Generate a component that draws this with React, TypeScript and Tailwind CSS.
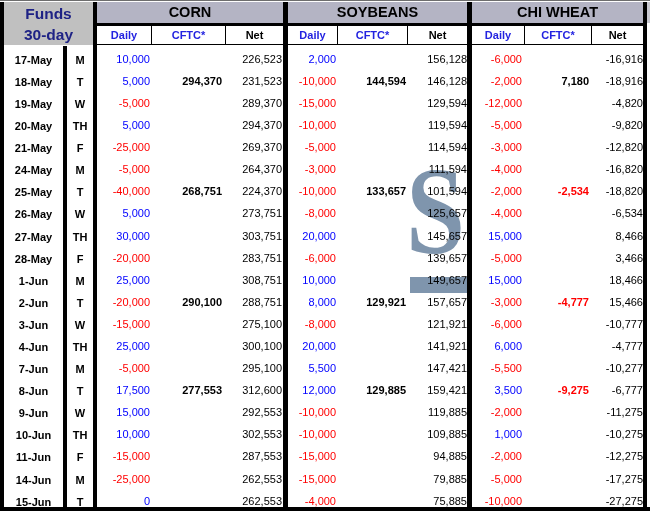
import React from 'react'

type Trio = [string, string, string]
type Row = { date: string; day: string; corn: Trio; soy: Trio; wheat: Trio }

const rows: Row[] = [
  { date: '17-May', day: 'M', corn: ['10,000', '', '226,523'], soy: ['2,000', '', '156,128'], wheat: ['-6,000', '', '-16,916'] },
  { date: '18-May', day: 'T', corn: ['5,000', '294,370', '231,523'], soy: ['-10,000', '144,594', '146,128'], wheat: ['-2,000', '7,180', '-18,916'] },
  { date: '19-May', day: 'W', corn: ['-5,000', '', '289,370'], soy: ['-15,000', '', '129,594'], wheat: ['-12,000', '', '-4,820'] },
  { date: '20-May', day: 'TH', corn: ['5,000', '', '294,370'], soy: ['-10,000', '', '119,594'], wheat: ['-5,000', '', '-9,820'] },
  { date: '21-May', day: 'F', corn: ['-25,000', '', '269,370'], soy: ['-5,000', '', '114,594'], wheat: ['-3,000', '', '-12,820'] },
  { date: '24-May', day: 'M', corn: ['-5,000', '', '264,370'], soy: ['-3,000', '', '111,594'], wheat: ['-4,000', '', '-16,820'] },
  { date: '25-May', day: 'T', corn: ['-40,000', '268,751', '224,370'], soy: ['-10,000', '133,657', '101,594'], wheat: ['-2,000', '-2,534', '-18,820'] },
  { date: '26-May', day: 'W', corn: ['5,000', '', '273,751'], soy: ['-8,000', '', '125,657'], wheat: ['-4,000', '', '-6,534'] },
  { date: '27-May', day: 'TH', corn: ['30,000', '', '303,751'], soy: ['20,000', '', '145,657'], wheat: ['15,000', '', '8,466'] },
  { date: '28-May', day: 'F', corn: ['-20,000', '', '283,751'], soy: ['-6,000', '', '139,657'], wheat: ['-5,000', '', '3,466'] },
  { date: '1-Jun', day: 'M', corn: ['25,000', '', '308,751'], soy: ['10,000', '', '149,657'], wheat: ['15,000', '', '18,466'] },
  { date: '2-Jun', day: 'T', corn: ['-20,000', '290,100', '288,751'], soy: ['8,000', '129,921', '157,657'], wheat: ['-3,000', '-4,777', '15,466'] },
  { date: '3-Jun', day: 'W', corn: ['-15,000', '', '275,100'], soy: ['-8,000', '', '121,921'], wheat: ['-6,000', '', '-10,777'] },
  { date: '4-Jun', day: 'TH', corn: ['25,000', '', '300,100'], soy: ['20,000', '', '141,921'], wheat: ['6,000', '', '-4,777'] },
  { date: '7-Jun', day: 'M', corn: ['-5,000', '', '295,100'], soy: ['5,500', '', '147,421'], wheat: ['-5,500', '', '-10,277'] },
  { date: '8-Jun', day: 'T', corn: ['17,500', '277,553', '312,600'], soy: ['12,000', '129,885', '159,421'], wheat: ['3,500', '-9,275', '-6,777'] },
  { date: '9-Jun', day: 'W', corn: ['15,000', '', '292,553'], soy: ['-10,000', '', '119,885'], wheat: ['-2,000', '', '-11,275'] },
  { date: '10-Jun', day: 'TH', corn: ['10,000', '', '302,553'], soy: ['-10,000', '', '109,885'], wheat: ['1,000', '', '-10,275'] },
  { date: '11-Jun', day: 'F', corn: ['-15,000', '', '287,553'], soy: ['-15,000', '', '94,885'], wheat: ['-2,000', '', '-12,275'] },
  { date: '14-Jun', day: 'M', corn: ['-25,000', '', '262,553'], soy: ['-15,000', '', '79,885'], wheat: ['-5,000', '', '-17,275'] },
  { date: '15-Jun', day: 'T', corn: ['0', '', '262,553'], soy: ['-4,000', '', '75,885'], wheat: ['-10,000', '', '-27,275'] },
]

// column widths per section: [daily, cftc, net] and right padding
type Section = { key: 'corn' | 'soy' | 'wheat'; title: string; width: string; cols: [string, string, string]; pads: [string, string, string] }

const sections: Section[] = [
  { key: 'corn', title: 'CORN', width: 'w-[186px]', cols: ['w-[55px]', 'w-[74px]', 'w-[57px]'], pads: ['pr-[2px]', 'pr-[4px]', 'pr-[1px]'] },
  { key: 'soy', title: 'SOYBEANS', width: 'w-[179px]', cols: ['w-[50px]', 'w-[70px]', 'w-[59px]'], pads: ['pr-[2px]', 'pr-[2px]', 'pr-0'] },
  { key: 'wheat', title: 'CHI WHEAT', width: 'w-[171px]', cols: ['w-[53px]', 'w-[67px]', 'w-[51px]'], pads: ['pr-[3px]', 'pr-[3px]', 'pr-0'] },
]

const tone = (v: string) => (v.startsWith('-') ? 'text-[#ff0000]' : 'text-[#0000ff]')

function SectionColumn({ s }: { s: Section }) {
  return (
    <div className={`${s.width} shrink-0 flex flex-col`}>
      <div className="h-[21px] bg-[#b4b4c4] flex items-center justify-center text-[14.5px] font-bold text-black">{s.title}</div>
      <div className="h-[3px] bg-black" />
      <div className="h-[19px] flex text-[11px] font-bold border-b border-black">
        <div className={`${s.cols[0]} flex items-center justify-center text-[#2323e0] border-r border-black`}>Daily</div>
        <div className={`${s.cols[1]} flex items-center justify-center text-[#2323e0] border-r border-black`}>CFTC*</div>
        <div className={`${s.cols[2]} flex items-center justify-center text-black`}>Net</div>
      </div>
      <div className="flex-1 overflow-hidden pt-[3px] text-[11px]">
        {rows.map(r => {
          const [daily, cftc, net] = r[s.key]
          return (
            <div key={r.date} className="h-[22.1px] flex items-center">
              <div className={`${s.cols[0]} ${s.pads[0]} text-right ${tone(daily)}`}>{daily}</div>
              <div className={`${s.cols[1]} ${s.pads[1]} text-right font-bold ${cftc.startsWith('-') ? 'text-[#ff0000]' : 'text-black'}`}>{cftc}</div>
              <div className={`${s.cols[2]} ${s.pads[2]} text-right text-black`}>{net}</div>
            </div>
          )
        })}
      </div>
    </div>
  )
}

export default function App() {
  return (
    <div className="relative w-[650px] h-[514px] bg-white overflow-hidden" style={{ fontFamily: '"Liberation Sans", Arial, sans-serif' }}>
      <div className="h-px bg-[#6e6e6e]" />
      <div className="h-px" />
      <div className="flex h-[509px] border-b-4 border-black">
        <div className="w-[4px] bg-black shrink-0" />

        {/* Funds / date + day */}
        <div className="w-[89px] shrink-0 flex flex-col">
          <div className="h-[43px] bg-[#c0c0c0] flex flex-col items-center justify-center text-[15.5px] font-bold leading-[21px] text-[#1e2285]">
            <span>Funds</span>
            <span>30-day</span>
          </div>
          <div className="h-px" />
          <div className="flex-1 flex overflow-hidden">
            <div className="w-[59px] pt-[3px] text-[11px] font-bold text-black">
              {rows.map(r => (
                <div key={r.date} className="h-[22.1px] flex items-center justify-center">{r.date}</div>
              ))}
            </div>
            <div className="w-[4px] bg-black" />
            <div className="w-[26px] pt-[3px] text-[11px] font-bold text-black">
              {rows.map(r => (
                <div key={r.date} className="h-[22.1px] flex items-center justify-center">{r.day}</div>
              ))}
            </div>
          </div>
        </div>

        <div className="w-[4px] bg-black shrink-0" />
        <SectionColumn s={sections[0]} />
        <div className="w-[5px] bg-black shrink-0" />
        <SectionColumn s={sections[1]} />
        <div className="w-[5px] bg-black shrink-0" />
        <SectionColumn s={sections[2]} />
        <div className="w-[4px] bg-black shrink-0" />
        <div className="flex-1 flex flex-col">
          <div className="h-[21px] bg-[#c8c8d0]" />
        </div>
      </div>

      {/* watermark */}
      <div className="pointer-events-none absolute left-[406px] top-[149px] mix-blend-multiply">
        <div
          className="text-[125px] leading-none font-bold text-[#7f95ad] origin-left scale-x-[0.85]"
          style={{ fontFamily: '"Liberation Serif", "Times New Roman", serif' }}
        >
          S
        </div>
      </div>
      <div className="pointer-events-none absolute left-[410px] top-[277px] w-[57px] h-[16px] bg-[#7f95ad] mix-blend-multiply" />
    </div>
  )
}
